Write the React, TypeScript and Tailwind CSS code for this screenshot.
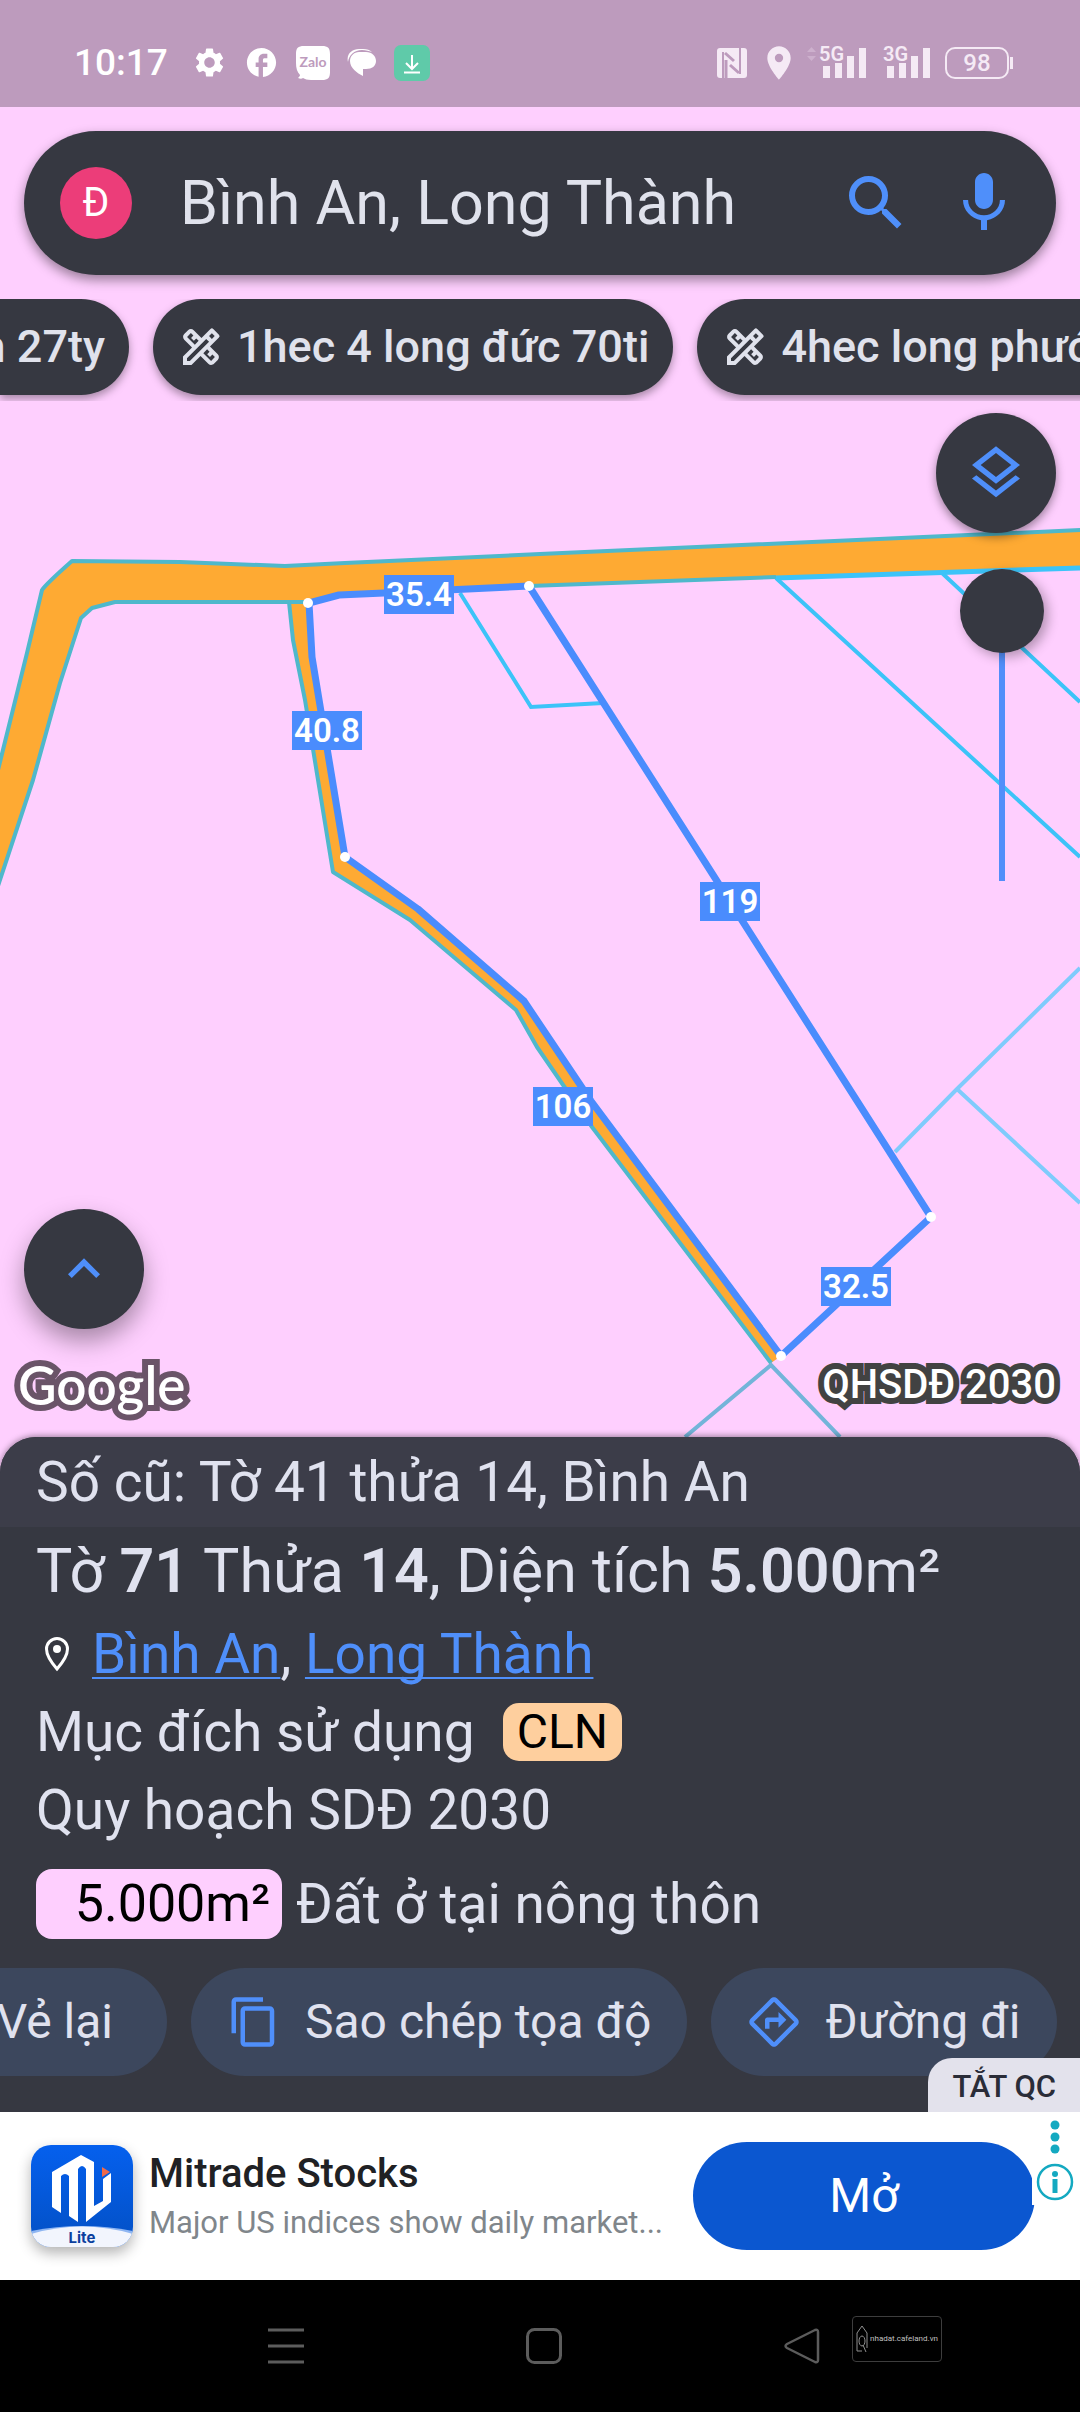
import type { ReactNode } from 'react';
import {
  MdContentCopy,
  MdFacebook,
  MdKeyboardArrowUp,
  MdLocationOn,
  MdMic,
  MdOutlineDesignServices,
  MdOutlineDirections,
  MdOutlineLayers,
  MdSearch,
  MdSettings,
} from 'react-icons/md';

type Measure = { value: string; x: number; y: number; w: number };

const MEASURES: Measure[] = [
  { value: '35.4', x: 384, y: 575, w: 70 },
  { value: '40.8', x: 292, y: 711, w: 70 },
  { value: '119', x: 700, y: 882, w: 60 },
  { value: '106', x: 533, y: 1087, w: 60 },
  { value: '32.5', x: 821, y: 1267, w: 70 },
];

const CORNERS = [
  [308, 603],
  [529, 586],
  [931, 1217],
  [781, 1356],
  [345, 857],
];

function ZaloIcon() {
  return (
    <svg viewBox="0 0 34 34" className="size-[34px]" role="img" aria-label="Zalo">
      <path fill="#fff" d="M8 0h18c6 0 8 2 8 8v18c0 6-2 8-8 8H15c-4 0-6-1-8-2-1 1-3 1-5 0 1-1 2-2 2-3C1 26 0 22 0 17V8c0-6 2-8 8-8z" />
      <text x="17" y="21" textAnchor="middle" fontSize="14" fontWeight="700" fill="#bd9bbd" fontFamily="Lato, sans-serif">Zalo</text>
    </svg>
  );
}

function ChatIcon() {
  return (
    <svg viewBox="0 0 30 30" className="size-[30px]" aria-hidden="true">
      <path fill="#fff" d="M1 14C-1 6 5 1 12 1h4c4 0 7 1 9 3-3-1-6-2-10-2C7 2 2 7 1 14z" />
      <path fill="#fff" d="M12 4h7c6 0 10 4 10 9s-4 8-10 8h-3v7C10 25 3 20 3 13c0-5 4-9 9-9z" />
    </svg>
  );
}

function DownloadBadge() {
  return (
    <svg viewBox="0 0 36 36" className="size-9" aria-hidden="true">
      <rect width="36" height="36" rx="7" fill="#5fcaa9" />
      <path fill="none" stroke="#fff" strokeWidth="2" d="M18 10v14M12 18l6 6 6-6M10 27.500h16" />
    </svg>
  );
}

function NfcIcon() {
  return (
    <svg viewBox="0 0 30 30" className="size-[30px]" aria-hidden="true">
      <rect width="30" height="30" rx="3" fill="#f5eaf5" />
      <path fill="none" stroke="#bd9bbd" strokeWidth="2" d="M6 30V4M23 26V0" />
      <path fill="none" stroke="#bd9bbd" strokeWidth="3" d="M8 5l9 8M9 30V12M13 17l9 8" />
    </svg>
  );
}

function Signal({ label, arrows }: { label: string; arrows?: boolean }) {
  return (
    <svg viewBox="0 -8 60 50" className="h-[50px] w-[60px]" role="img" aria-label={label}>
      {arrows && <path fill="#cdb0cd" d="M0 6l4.500-5L9 6zM0 10l4.500 5L9 10z" />}
      <text x="12" y="15" fontSize="20" fontWeight="600" fill="#f5eaf5" fontFamily="Roboto, sans-serif">{label}</text>
      <path fill="#f5eaf5" d="M16 20h7v12h-7zM28 17h7v15h-7zM40 10h7v22h-7zM52 2h7v30h-7z" />
    </svg>
  );
}

function StatusBar() {
  return (
    <header className="flex h-[107px] items-center justify-between bg-[#bd9bbd] pt-[18px] pr-[67px] pl-[74px]">
      <div className="flex items-center text-white">
        <time className="w-[118px] text-[37px] font-medium">10:17</time>
        <div className="flex items-center gap-[17px]">
          <MdSettings className="size-[35px]" />
          <MdFacebook className="size-[35px]" />
          <ZaloIcon />
          <ChatIcon />
          <DownloadBadge />
        </div>
      </div>
      <div className="flex items-center text-[#f5eaf5]">
        <NfcIcon />
        <MdLocationOn className="ml-3 size-[40px]" />
        <div className="ml-2 flex gap-1">
          <Signal label="5G" arrows />
          <Signal label="3G" />
        </div>
        <div className="ml-[14px] flex items-center gap-[1px]">
          <span className="flex h-8 w-16 items-center justify-center rounded-[10px] border-2 border-current text-[24px] font-medium">98</span>
          <span className="h-3 w-[3px] bg-current" />
        </div>
      </div>
    </header>
  );
}

function ParcelMap() {
  return (
    <svg viewBox="0 107 1080 1330" preserveAspectRatio="xMidYMid slice" className="absolute inset-0 h-full w-full" role="img" aria-label="Bản đồ thửa đất">
      <rect y="107" width="1080" height="1330" fill="#fecffe" />
      <path fill="#feaa33" d="M0 763L27 653 42 590 72 561 180 562 285 566 345 563 540 554 1080 530V567L776 577 529 586 339 594 309 603 312 657 345 857 418 909 524 1001 591 1101 781 1356 771 1363 592 1127 537 1047 516 1010 410 920 333 872 305 700 293 640 289 602H115L92 608 81 618 60 683 33 780 0 880z" />
      <g fill="none" stroke="#4fb8cb" strokeWidth="4" strokeLinejoin="round">
        <path d="M-2 770L27 653 42 590Q46 584 72 561L180 562 285 566 345 563 540 554 1082 530" />
        <path d="M-2 886L33 780 60 683 81 618 92 608 115 602H308" />
        <path d="M289 602L293 640 305 700 333 872 410 920 516 1010 537 1047 592 1127 771 1363" />
        <path d="M529 586L776 577" />
      </g>
      <g fill="none" stroke="#3cc3f8" strokeWidth="4">
        <path d="M460 593L531 707 603 703" />
        <path d="M776 578L1080 857M942 573L1080 702" />
        <path d="M776 578L1080 568" strokeWidth="5" />
      </g>
      <path fill="none" stroke="#7fcbfc" strokeWidth="4" d="M1080 968L957 1089 895 1152M957 1089L1080 1203" />
      <path fill="none" stroke="#73b4d9" strokeWidth="4" d="M685 1437L771 1365 840 1437" />
      <path fill="none" stroke="#4a8cfd" strokeWidth="7" strokeLinejoin="round" d="M309 603L339 595 384 593 529 586 931 1217 781 1356 591 1101 524 1001 418 909 345 857 312 657z" />
      {CORNERS.map(([x, y]) => (
        <circle key={`${x}-${y}`} cx={x} cy={y} r="5" fill="#fff" />
      ))}
      {MEASURES.map(m => (
        <g key={m.value}>
          <rect x={m.x} y={m.y} width={m.w} height="39" fill="#4a8cfd" />
          <text x={m.x + m.w / 2} y={m.y + 31} textAnchor="middle" fontSize="33" fontWeight="600" fill="#fff" fontFamily="Roboto, sans-serif">
            {m.value}
          </text>
        </g>
      ))}
    </svg>
  );
}

function SearchBar() {
  return (
    <form role="search" onSubmit={e => e.preventDefault()} className="relative mx-6 mt-6 flex h-36 items-center rounded-full bg-[#363841] px-9 shadow-[0_5px_12px_rgba(0,0,0,0.4)]">
      <button type="button" aria-label="Tài khoản" className="size-[72px] shrink-0 rounded-full bg-[#ec3d79] text-[40px] text-white">
        Đ
      </button>
      <input
        aria-label="Tìm kiếm"
        defaultValue="Bình An, Long Thành"
        className="ml-12 h-24 min-w-0 flex-1 bg-transparent text-[61px] text-[#e0e2ec] outline-none"
      />
      <button type="submit" aria-label="Tìm" className="text-[#4f8ffa]">
        <MdSearch className="size-[72px]" />
      </button>
      <button type="button" aria-label="Giọng nói" className="ml-9 text-[#4f8ffa]">
        <MdMic className="size-[72px]" />
      </button>
    </form>
  );
}

const chip = 'flex h-24 shrink-0 items-center gap-3 whitespace-nowrap bg-[#363841] px-6 text-[45px] font-medium text-[#e0e2ec] shadow-[0_4px_8px_rgba(0,0,0,0.35)]';

function SavedChips() {
  return (
    <nav aria-label="Đã lưu" className="relative mt-6 flex gap-6 overflow-hidden pb-[6px]">
      <button className={`${chip} w-[129px] justify-end rounded-r-full`}>n 27ty</button>
      {['1hec 4 long đức 70ti', '4hec long phước'].map(label => (
        <button key={label} className={`${chip} rounded-full`}>
          <MdOutlineDesignServices className="size-12" />
          {label}
        </button>
      ))}
    </nav>
  );
}

const roundButton = 'grid size-[120px] place-items-center rounded-full bg-[#363841] text-[#4f8ffa]';

function MapControls() {
  return (
    <div className="relative flex flex-1 flex-col">
      <div className="flex flex-col items-end px-6 pt-3">
        <button aria-label="Lớp bản đồ" className={`${roundButton} shadow-[0_4px_10px_rgba(0,0,0,0.4)]`}>
          <MdOutlineLayers className="size-16" />
        </button>
        <input
          type="range"
          aria-label="Độ mờ"
          defaultValue={0}
          className="mt-9 mr-3 h-[312px] w-[84px] appearance-none bg-[linear-gradient(#528efa,#528efa)] bg-[length:6px_100%] bg-center bg-no-repeat [writing-mode:vertical-lr] [&::-webkit-slider-thumb]:size-[84px] [&::-webkit-slider-thumb]:appearance-none [&::-webkit-slider-thumb]:rounded-full [&::-webkit-slider-thumb]:bg-[#363841] [&::-webkit-slider-thumb]:shadow-[4px_4px_12px_rgba(0,0,0,0.3)]"
        />
      </div>
      <button aria-label="Mở rộng" className={`${roundButton} mt-auto ml-6 shadow-[0_12px_24px_rgba(0,0,0,0.35)]`}>
        <MdKeyboardArrowUp className="size-16" />
      </button>
      <div className="flex h-[108px] items-center justify-between pt-1 pr-6 pl-[18px]">
        <span className="font-[Lato,sans-serif] text-[53px] font-semibold text-white [-webkit-text-stroke:12px_#6a5468] [paint-order:stroke_fill] [stroke-linejoin:round]">Google</span>
        <span className="text-[40px] font-medium text-white [-webkit-text-stroke:12px_#424242] [paint-order:stroke_fill] [stroke-linejoin:round]">QHSDĐ 2030</span>
      </div>
    </div>
  );
}

function Row({ children }: { children: ReactNode }) {
  return <div className="flex h-[78px] items-center">{children}</div>;
}

function PinIcon() {
  return (
    <svg viewBox="0 0 26 36" className="mr-[22px] ml-2 h-9 w-[26px]" aria-hidden="true">
      <path fill="none" stroke="#fff" strokeWidth="3" d="M13 33C6 25 2.500 19 2.500 13a10.500 10.500 0 0 1 21 0c0 6-3.500 12-10.500 20z" />
      <circle cx="13" cy="13" r="4" fill="#fff" />
    </svg>
  );
}

const action = 'flex h-[108px] shrink-0 items-center gap-6 whitespace-nowrap bg-[#3c475d]';
const link = 'text-[#4f8ffa] underline decoration-2 underline-offset-[4px] [text-decoration-skip-ink:none]';

function ParcelSheet() {
  return (
    <section className="relative overflow-hidden rounded-t-[36px] bg-[#363841] text-[55px] text-[#e0e2ef] shadow-[0_-1px_6px_rgba(0,0,0,0.4)]">
      <p className="flex h-[90px] items-center bg-[#3c3d49] px-9">Số cũ: Tờ 41 thửa 14, Bình An</p>
      <div className="px-9 pt-[2px]">
        <h1 className="flex h-[86px] items-center text-[61px] whitespace-pre">
          Tờ <b className="font-semibold">71</b> Thửa <b className="font-semibold">14</b>, Diện tích <b className="font-semibold">5.000</b>m²
        </h1>
        <Row>
          <PinIcon />
          <p>
            <a href="#binh-an" className={link}>Bình An</a>
            {', '}
            <a href="#long-thanh" className={link}>Long Thành</a>
          </p>
        </Row>
        <Row>
          Mục đích sử dụng
          <span className="ml-7 flex h-[58px] items-center rounded-[16px] bg-[#fecf9e] px-[14px] text-[48px] text-black">CLN</span>
        </Row>
        <Row>Quy hoạch SDĐ 2030</Row>
        <div className="flex h-[110px] items-center gap-[14px]">
          <span className="flex h-[70px] w-[246px] items-center justify-end rounded-[16px] bg-[#fecffe] pr-3 text-[52px] text-black">5.000m²</span>
          Đất ở tại nông thôn
        </div>
      </div>
      <div className="mt-[9px] flex gap-6 overflow-hidden pb-9 text-[48px]">
        <button className={`${action} w-[167px] justify-end rounded-r-full pr-[54px]`}>Vẻ lại</button>
        <button className={`${action} rounded-full px-9`}>
          <MdContentCopy className="size-[54px] text-[#4f8ffa]" />
          Sao chép tọa độ
        </button>
        <button className={`${action} rounded-full px-9`}>
          <MdOutlineDirections className="size-[54px] text-[#4f8ffa]" />
          Đường đi
        </button>
      </div>
      <button className="absolute right-0 bottom-0 h-[54px] rounded-tl-[24px] bg-[#e3e2ec] px-6 pt-1 text-[31px] font-medium text-[#2a2c38]">TẮT QC</button>
    </section>
  );
}

function MitradeLogo() {
  return (
    <svg viewBox="0 0 102 102" className="size-[102px] shrink-0 rounded-[20px] shadow-[0_6px_14px_rgba(0,0,0,0.3)]" role="img" aria-label="Mitrade Lite">
      <defs>
        <linearGradient id="mitrade" x1="0" y1="0" x2="0" y2="1">
          <stop offset="0" stopColor="#0560ee" />
          <stop offset="1" stopColor="#0350c4" />
        </linearGradient>
      </defs>
      <rect width="102" height="102" fill="url(#mitrade)" />
      <path fill="#8fb6f2" d="M0 86Q51 76 102 86V102H0z" />
      <path fill="#f2f5fd" d="M0 89Q51 74 102 89V102H0z" />
      <path fill="#fff" d="M21 27L50 10 63 17V61L72 56V34L80 28V57L55 77V24Q51 18 47 24V77L38 71V31Q34 27 30 31V68L21 62z" />
      <path fill="#ef6a4a" d="M71 22L79 27 71 32z" />
      <text x="51" y="98" textAnchor="middle" fontSize="15" fontWeight="700" fill="#0b3f9e" fontFamily="Inter, sans-serif">Lite</text>
    </svg>
  );
}

function AdBanner() {
  return (
    <aside className="relative flex h-[168px] items-center bg-white pr-[45px] pl-[31px]">
      <MitradeLogo />
      <div className="ml-4 min-w-0 flex-1 pt-1">
        <h2 className="text-[40px] leading-[50px] font-medium text-[#202124]">Mitrade Stocks</h2>
        <p className="truncate text-[31px] leading-[48px] text-[#80868b]">Major US indices show daily market...</p>
      </div>
      <button className="ml-5 h-[108px] w-[342px] shrink-0 rounded-full bg-[#0b57d0] text-[48px] text-white">Mở</button>
      <button aria-label="Thông tin quảng cáo" className="absolute top-0 right-0 h-[93px] w-12 bg-white">
        <svg viewBox="0 0 48 93" className="h-[93px] w-12" fill="#14a9c1">
          <circle cx="23" cy="13" r="4.500" />
          <circle cx="23" cy="25" r="4.500" />
          <circle cx="23" cy="37" r="4.500" />
          <circle cx="23" cy="70" r="17" fill="none" stroke="#14a9c1" strokeWidth="2.500" />
          <circle cx="23" cy="62" r="3" />
          <path d="M20.500 67h5v14h-5z" />
        </svg>
      </button>
    </aside>
  );
}

function NavigationBar() {
  return (
    <footer className="relative grid h-[132px] grid-cols-3 items-center bg-black pr-[149px] pl-[157px]">
      <button aria-label="Gần đây" className="justify-self-center">
        <svg viewBox="0 0 36 36" className="size-9" stroke="#5c5c5c" strokeWidth="3">
          <path d="M0 2h36M0 18h36M0 34h36" />
        </svg>
      </button>
      <button aria-label="Trang chủ" className="justify-self-center">
        <svg viewBox="0 0 36 36" className="size-9" fill="none" stroke="#5c5c5c" strokeWidth="3">
          <rect x="1.500" y="1.500" width="33" height="33" rx="7" />
        </svg>
      </button>
      <button aria-label="Quay lại" className="justify-self-center">
        <svg viewBox="0 0 36 36" className="size-9" fill="none" stroke="#5c5c5c" strokeWidth="2.500" strokeLinejoin="round">
          <path d="M31 2Q34 1 34 4V32Q34 35 31 34L3 20Q0 18 3 16z" />
        </svg>
      </button>
      <div className="absolute top-9 right-[138px] flex h-[46px] w-[90px] items-center justify-center gap-[2px] rounded-[4px] border border-[#3d3d3d] text-[8px] text-[#c0c0c0]">
        <svg viewBox="0 0 12 28" className="h-7 w-3 shrink-0" fill="none" stroke="#909090">
          <path d="M6 26H1V8L6 1 11 8V23" />
          <ellipse cx="6" cy="16" rx="3" ry="5" />
          <path d="M7 20L10 27" />
        </svg>
        nhadat.cafeland.vn
      </div>
    </footer>
  );
}

export default function App() {
  return (
    <div className="flex min-h-screen flex-col overflow-x-hidden bg-[#fecffe] font-[Roboto,sans-serif]">
      <StatusBar />
      <main className="relative flex flex-1 flex-col overflow-hidden">
        <ParcelMap />
        <SearchBar />
        <SavedChips />
        <MapControls />
      </main>
      <ParcelSheet />
      <AdBanner />
      <NavigationBar />
    </div>
  );
}
